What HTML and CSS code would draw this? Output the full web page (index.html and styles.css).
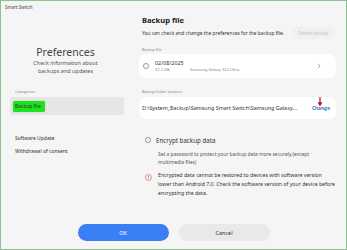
FILE: index.html
```html
<!DOCTYPE html>
<html lang="en">
<head>
    <meta charset="UTF-8">
    <meta name="viewport" content="width=device-width, initial-scale=1.0">
    <title>Smart Switch</title>
    <link rel="stylesheet" href="styles.css">
</head>
<body>
    <div class="window">
        <div class="titlebar">Smart Switch</div>
        <div class="main">
            <div class="sidebar">
                <div class="prefs">
                    <h2>Preferences</h2>
                    <p>Check information about<br>backups and updates</p>
                </div>
                <div class="cat-label">Categories</div>
                <div class="nav-item active"><span class="mark">Backup file</span></div>
                <div class="nav-item first">Software Update</div>
                <div class="nav-item">Withdrawal of consent</div>
            </div>
            <div class="content">
                <h1>Backup file</h1>
                <div class="desc-row">
                    <span class="desc">You can check and change the preferences for the backup file.</span>
                    <button class="delete-btn">Delete backup</button>
                </div>
                <div class="field-label">Backup file</div>
                <div class="card backup-card">
                    <span class="radio"></span>
                    <div class="backup-info">
                        <div class="date">02/08/2025</div>
                        <div class="meta"><span class="size">37.2 GB</span><span>Samsung Galaxy S22 Ultra</span></div>
                    </div>
                    <svg class="chevron" width="4" height="6" viewBox="0 0 4 6"><path d="M1 0.8 L3 3 L1 5.2" fill="none" stroke="#888" stroke-width="0.7"/></svg>
                </div>
                <div class="field-label second">Backup folder location</div>
                <div class="card folder-card">
                    <span class="path">D:\System_Backup\Samsung Smart Switch\Samsung Galaxy...</span>
                    <span class="change">Change</span>
                    <svg class="arrow" width="6" height="10" viewBox="0 0 6 10"><path d="M3 0 V6" stroke="#c40f0f" stroke-width="1.2"/><path d="M0.6 5.2 L3 9.5 L5.4 5.2 Z" fill="#c40f0f"/></svg>
                </div>
                <div class="encrypt-row">
                    <span class="radio"></span>
                    <span class="encrypt-title">Encrypt backup data</span>
                </div>
                <p class="encrypt-desc">Set a password to protect your backup data more securely.(except multimedia files)</p>
                <div class="warning">
                    <svg class="warn-icon" width="7" height="7" viewBox="0 0 7 7"><circle cx="3.5" cy="3.5" r="3" fill="none" stroke="#d9534f" stroke-width="0.6"/><path d="M3.5 1.7 V4" stroke="#d9534f" stroke-width="0.7"/><circle cx="3.5" cy="5" r="0.4" fill="#d9534f"/></svg>
                    <p>Encrypted data cannot be restored to devices with software version lower than Android 7.0. Check the software version of your device before encrypting the data.</p>
                </div>
            </div>
        </div>
        <div class="footer">
            <button class="btn ok">OK</button>
            <button class="btn cancel">Cancel</button>
        </div>
    </div>
</body>
</html>
```

FILE: styles.css
```css
* {
    box-sizing: border-box;
}

body {
    margin: 0;
    font-family: 'Noto Sans', 'Open Sans', sans-serif;
    color: #333;
    background-color: #f5f5f5;
}

.window {
    width: 347px;
    height: 250px;
    border: 1px solid #8fc08f;
    display: flex;
    flex-direction: column;
    background-color: #f5f5f5;
    overflow: hidden;
}

.titlebar {
    height: 12px;
    line-height: 12px;
    font-size: 4.5px;
    padding-left: 4px;
    color: #444;
}

.main {
    flex: 1;
    display: flex;
    min-height: 0;
}

.sidebar {
    width: 123px;
    padding-left: 9px;
}

.prefs {
    text-align: center;
    margin-top: 32px;
    padding-right: 3px;
}

.prefs h2 {
    margin: 0;
    font-size: 10.5px;
    line-height: 14px;
    font-weight: 400;
    color: #444;
}

.prefs p {
    margin: 1px 0 0;
    font-size: 5.5px;
    line-height: 7.5px;
    color: #555;
}

.cat-label {
    margin-top: 14px;
    padding-left: 5px;
    font-size: 4px;
    line-height: 6px;
    color: #888;
}

.nav-item {
    padding-left: 5px;
    font-size: 5px;
    line-height: 13px;
    color: #333;
}

.nav-item.active {
    margin-top: 2px;
    height: 18px;
    padding-left: 3px;
    display: flex;
    align-items: center;
    background-color: #e6e6e6;
    border-radius: 3px 0 0 3px;
}

.mark {
    display: inline-block;
    padding: 0 4px 0 2px;
    height: 11px;
    line-height: 11px;
    margin-top: 1px;
    background-color: #1de21d;
    border-radius: 2px;
    box-shadow: 0 0 1px rgba(0,0,0,0.4);
}

.nav-item.first {
    margin-top: 16.5px;
}

.content {
    flex: 1;
    padding: 0 12px 0 18px;
}

.content h1 {
    margin: 2px 0 0;
    font-size: 7.6px;
    line-height: 10px;
    font-weight: 700;
    color: #222;
}

.desc-row {
    margin-top: 2px;
    height: 12px;
    display: flex;
    align-items: center;
    justify-content: space-between;
}

.desc {
    font-size: 4.9px;
    color: #333;
    white-space: nowrap;
}

.delete-btn {
    width: 42px;
    height: 12px;
    padding: 0;
    border: none;
    border-radius: 4px;
    background-color: #f0f0f0;
    color: #c4c4c4;
    font-family: inherit;
    font-size: 4.6px;
}

.field-label {
    margin-top: 8px;
    font-size: 3.8px;
    line-height: 6px;
    color: #888;
}

.field-label.second {
    margin-top: 11px;
}

.card {
    margin-left: -3px;
    margin-right: -2px;
    background-color: #fff;
    border-radius: 7px;
    display: flex;
    align-items: center;
}

.backup-card {
    margin-top: 1px;
    height: 24px;
    padding: 0 15px 0 4px;
}

.radio {
    width: 6px;
    height: 6px;
    border: 0.6px solid #999;
    border-radius: 50%;
    flex-shrink: 0;
}

.backup-info {
    flex: 1;
    margin-left: 6px;
}

.date {
    font-size: 5.4px;
    line-height: 7px;
    color: #333;
}

.meta {
    font-size: 4px;
    line-height: 6px;
    color: #888;
}

.size {
    display: inline-block;
    width: 35px;
}

.folder-card {
    position: relative;
    margin-top: 2px;
    height: 22px;
    padding: 0 6px 0 3px;
    justify-content: space-between;
}

.path {
    font-size: 5.4px;
    color: #333;
    white-space: nowrap;
}

.change {
    font-size: 4.8px;
    font-weight: 700;
    color: #2f7fd6;
}

.arrow {
    position: absolute;
    right: 13px;
    top: 0;
}

.encrypt-row {
    margin-top: 16.5px;
    display: flex;
    align-items: center;
    height: 9px;
    padding-left: 3px;
}

.encrypt-title {
    margin-left: 5px;
    font-size: 6.2px;
    color: #333;
}

.encrypt-desc {
    margin: 5.5px 0 0 16px;
    font-size: 4.9px;
    line-height: 8px;
    color: #555;
}

.warning {
    margin: 5px -1.5px 0 0;
    display: flex;
    align-items: flex-start;
}

.warn-icon {
    margin: 2.5px 0 0 3px;
    flex-shrink: 0;
}

.warning p {
    margin: 0 0 0 6px;
    font-size: 5.2px;
    line-height: 9px;
    color: #333;
}

.footer {
    height: 35px;
    display: flex;
    justify-content: center;
    align-items: flex-end;
    gap: 10px;
    padding-bottom: 8px;
}

.btn {
    width: 91px;
    height: 17px;
    border: none;
    border-radius: 9px;
    font-family: inherit;
    font-size: 5.5px;
    padding: 0;
}

.btn.ok {
    background-color: #3a7ff6;
    color: #fff;
}

.btn.cancel {
    background-color: #e9e9e9;
    color: #333;
}
```
